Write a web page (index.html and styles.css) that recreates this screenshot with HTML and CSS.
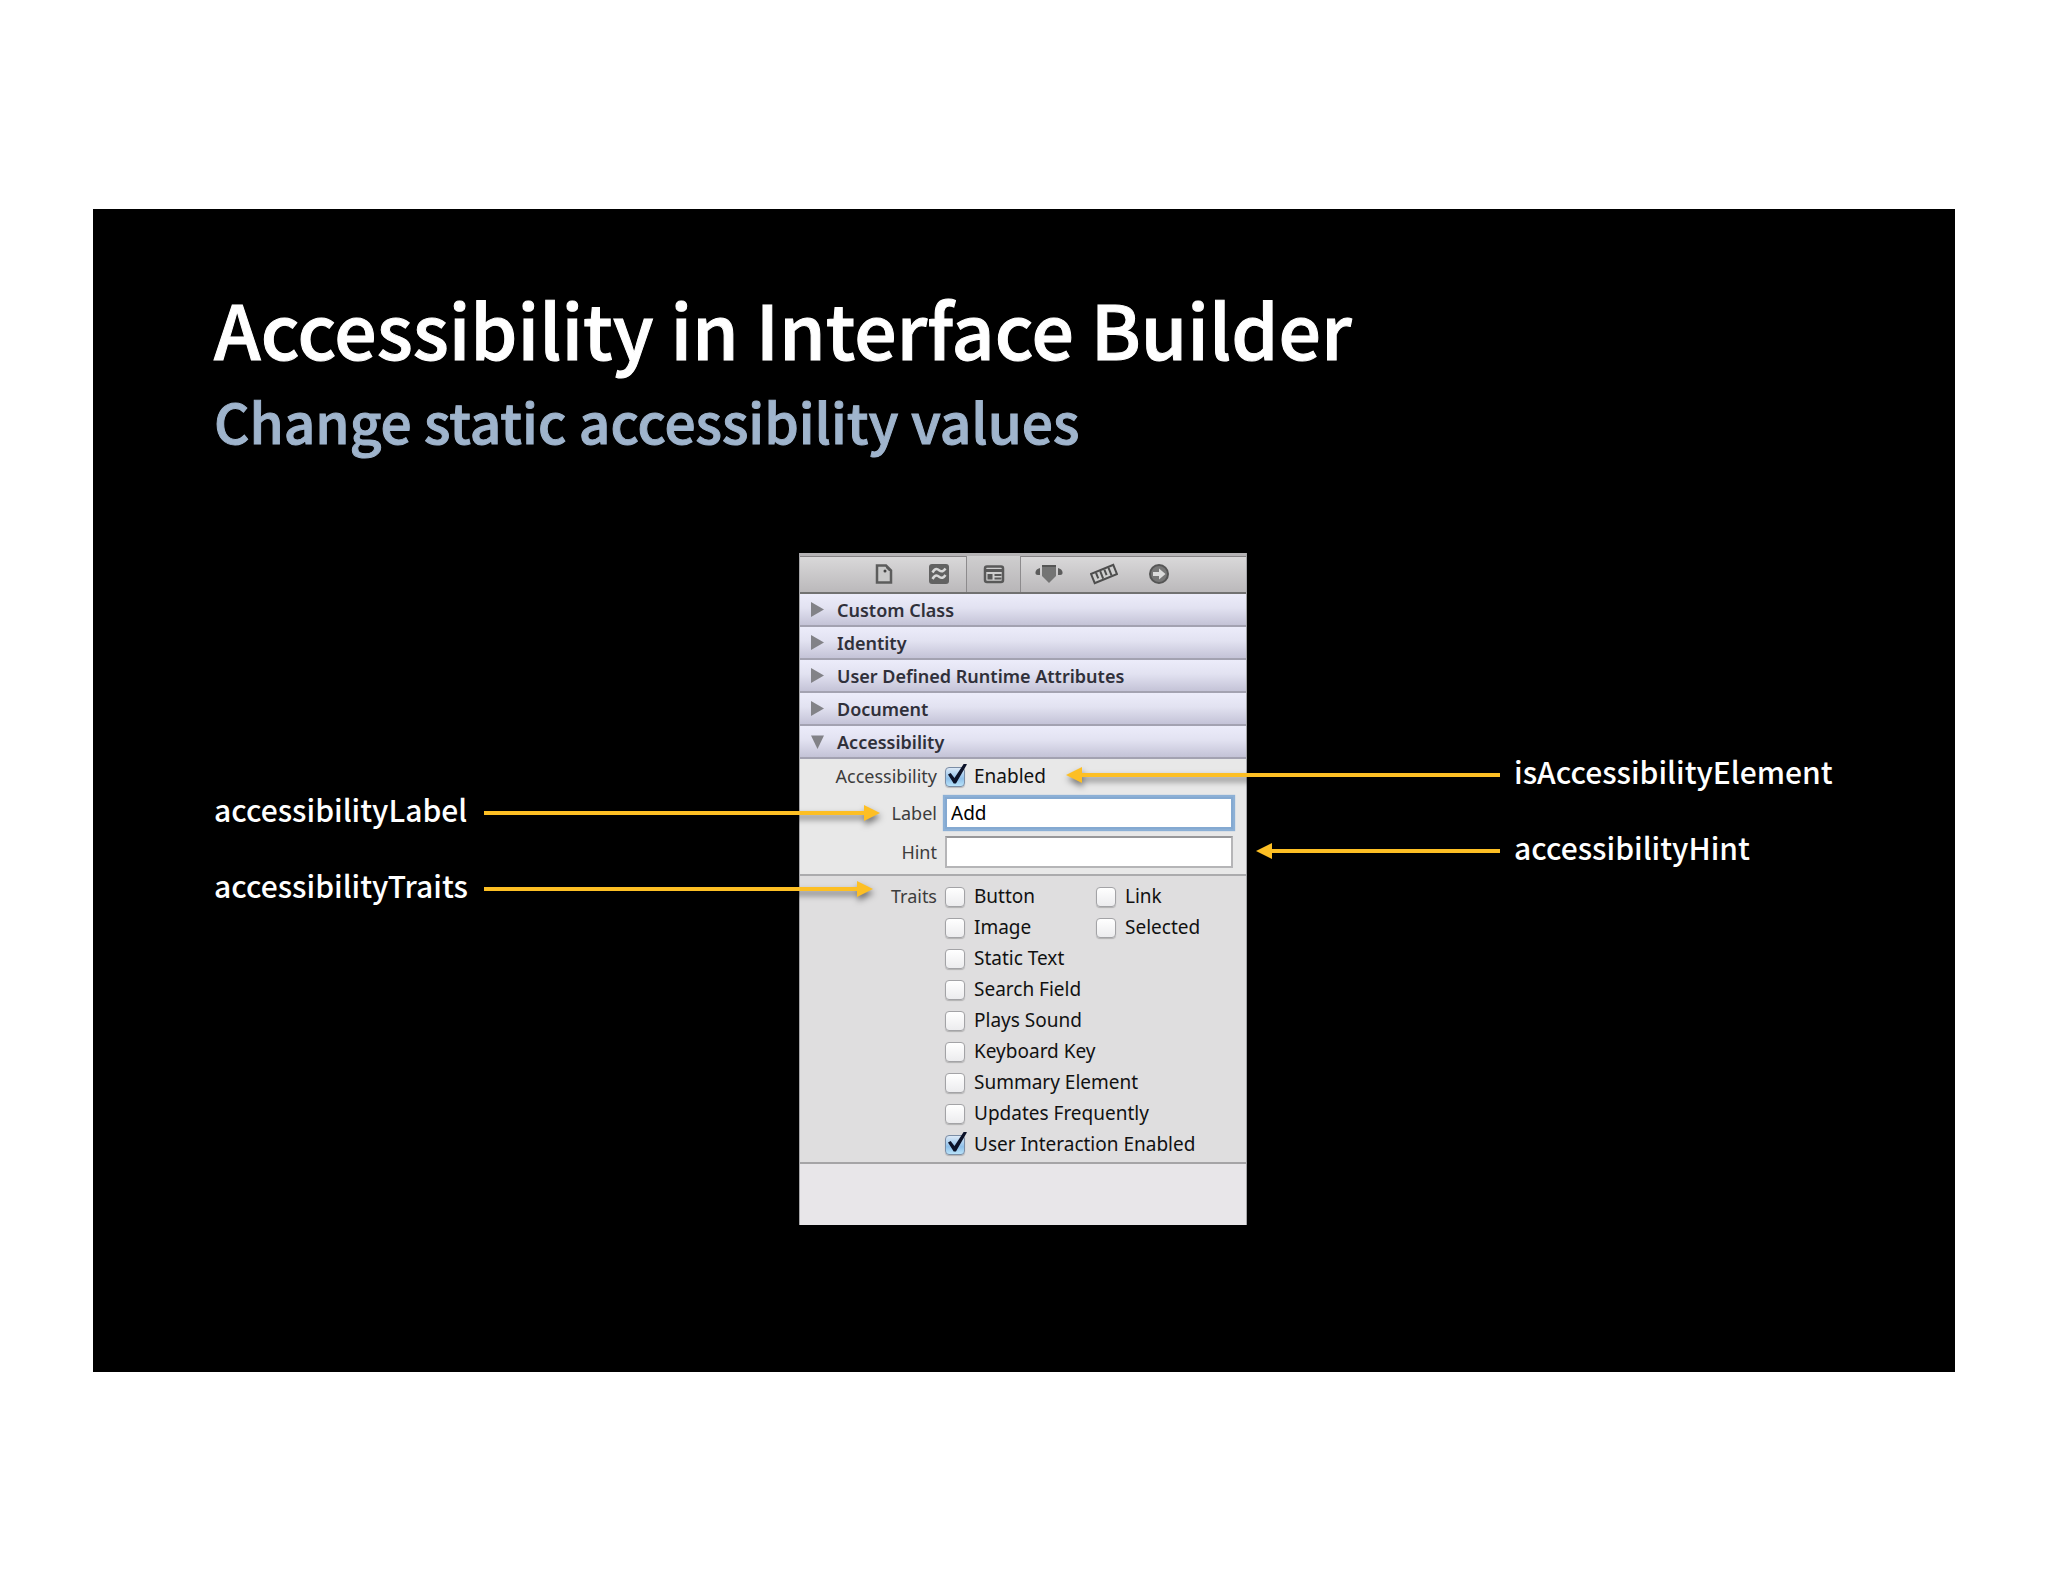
FILE: index.html
```html
<!DOCTYPE html>
<html lang="en">
<head>
  <meta charset="UTF-8" />
  <meta name="viewport" content="width=device-width, initial-scale=1" />
  <title>Accessibility in Interface Builder</title>
  <link rel="stylesheet" href="styles.css">
</head>
<body>

<main class="slide">
  <h1 class="title">Accessibility in Interface Builder</h1>
  <h2 class="subtitle">Change static accessibility values</h2>

  <div class="stage">

    <div class="callouts callouts-left">
      <div class="callout">
        <span class="callout-text">accessibilityLabel</span>
        <span class="arrow arrow-right to-label"></span>
      </div>
      <div class="callout">
        <span class="callout-text">accessibilityTraits</span>
        <span class="arrow arrow-right to-traits"></span>
      </div>
    </div>

    <!-- Inspector panel -->
    <div class="inspector">
      <div class="toolbar">
        <button class="tool" aria-label="File inspector">
          <svg width="22" height="22" viewBox="0 0 22 22"><path d="M4 2.500h9l5 5v12H4z" fill="#c9c9c9" stroke="#5c5c5c" stroke-width="2.500"/><path d="M13 2l6 6h-3l-3-3z" fill="#5c5c5c"/><circle cx="12" cy="8" r="1.500" fill="#444"/></svg>
        </button>
        <button class="tool" aria-label="Quick help">
          <svg width="22" height="22" viewBox="0 0 22 22"><rect x="1" y="1" width="20" height="20" rx="3" fill="#626262"/><path d="M4.500 9.500c3-5 5-3.500 7-2s4 1 6-2M4.500 16c3-5 5-3.500 7-2s4 1 6-2" fill="none" stroke="#d8d8d8" stroke-width="2.500"/></svg>
        </button>
        <button class="tool selected" aria-label="Identity inspector">
          <svg width="22" height="22" viewBox="0 0 22 22"><rect x="2" y="3.500" width="18" height="15.500" rx="2" fill="#cfcfcf" stroke="#595959" stroke-width="2.500"/><path d="M2 7.500h18" stroke="#595959" stroke-width="3"/><rect x="4.500" y="11" width="5" height="5.500" fill="#595959"/><path d="M11.500 12h7M11.500 15.500h7" stroke="#595959" stroke-width="2"/></svg>
        </button>
        <button class="tool" aria-label="Attributes inspector">
          <svg width="28" height="22" viewBox="0 0 28 22"><path d="M7 2h14v11l-7 7-7-7z" fill="#747474"/><path d="M7 3h14" stroke="#555" stroke-width="2"/><path d="M5 5v7H3Q0 12 .500 9 1 6 5 5zM23 5v7h2q3 0 2.500-3-.500-3-4.500-4z" fill="#5c5c5c"/></svg>
        </button>
        <button class="tool" aria-label="Size inspector">
          <svg width="28" height="22" viewBox="0 0 28 22"><g transform="rotate(-22 14 11)" fill="none" stroke="#4e4e4e"><rect x="2" y="6" width="24" height="10" fill="#cfcfcf" stroke-width="2"/><path d="M7 7v6M11.500 7v8M16 7v6M20.500 7v8" stroke-width="2"/></g></svg>
        </button>
        <button class="tool" aria-label="Connections inspector">
          <svg width="22" height="22" viewBox="0 0 22 22"><circle cx="11" cy="11" r="9" fill="#777" stroke="#555" stroke-width="2"/><path d="M5 9h6V5.500l6.500 5.500-6.500 5.500V13H5z" fill="#dcdcdc"/></svg>
        </button>
      </div>

      <button class="section-head"><span class="disclosure"></span>Custom Class</button>
      <button class="section-head"><span class="disclosure"></span>Identity</button>
      <button class="section-head"><span class="disclosure"></span>User Defined Runtime Attributes</button>
      <button class="section-head"><span class="disclosure"></span>Document</button>
      <button class="section-head" aria-expanded="true"><span class="disclosure open"></span>Accessibility</button>

      <div class="fields">
        <span class="field-label">Accessibility</span>
        <label class="check"><input type="checkbox" checked>Enabled</label>
        <label class="field-label" for="label">Label</label>
        <input class="text-field focused" type="text" id="label" value="Add">
        <label class="field-label" for="hint">Hint</label>
        <input class="text-field" type="text" id="hint">
      </div>

      <div class="traits">
        <span class="field-label">Traits</span>
        <div class="trait-list">
          <label class="check"><input type="checkbox">Button</label>
          <label class="check"><input type="checkbox">Link</label>
          <label class="check"><input type="checkbox">Image</label>
          <label class="check"><input type="checkbox">Selected</label>
          <label class="check wide"><input type="checkbox">Static Text</label>
          <label class="check wide"><input type="checkbox">Search Field</label>
          <label class="check wide"><input type="checkbox">Plays Sound</label>
          <label class="check wide"><input type="checkbox">Keyboard Key</label>
          <label class="check wide"><input type="checkbox">Summary Element</label>
          <label class="check wide"><input type="checkbox">Updates Frequently</label>
          <label class="check wide"><input type="checkbox" checked>User Interaction Enabled</label>
        </div>
      </div>
    </div>

    <div class="callouts callouts-right">
      <div class="callout">
        <span class="arrow arrow-left to-enabled"></span>
        <span class="callout-text">isAccessibilityElement</span>
      </div>
      <div class="callout">
        <span class="arrow arrow-left to-hint"></span>
        <span class="callout-text">accessibilityHint</span>
      </div>
    </div>

  </div>
</main>

</body>
</html>
```
FILE: styles.css
```css
* {
  box-sizing: border-box;
}
body {
  margin: 0;
  padding: 209px 93px;
  background: #fff;
  font-family: 'Noto Sans CJK SC', 'Open Sans', sans-serif;
}
.slide {
  background: #000;
  color: #fff;
  padding: 79px 123px 147px 121px;
}
.title {
  margin: 0;
  font-size: 75px;
  line-height: 80px;
  font-weight: 500;
  -webkit-text-stroke: 1px;
}
.subtitle {
  margin: 20px 0 101px;
  font-size: 55px;
  line-height: 64px;
  font-weight: 500;
  color: #9fb4cc;
  -webkit-text-stroke: 1px;
}
.stage {
  display: grid;
  grid-template-columns: 1fr 448px 1fr;
}

/* Callouts */
.callouts {
  position: relative;
  z-index: 1;
  display: flex;
  flex-direction: column;
  gap: 36px;
}
.callouts-left {
  padding-top: 240px;
}
.callouts-right {
  padding-top: 202px;
}
.callout {
  display: flex;
  align-items: center;
  gap: 14px;
  height: 40px;
}
.callout-text {
  font-size: 30px;
  line-height: 32px;
  font-weight: 500;
  padding-bottom: 8px;
  white-space: nowrap;
}
.callouts-left .callout-text {
  width: 256px;
}
.callouts-right .callout-text {
  width: 318px;
}
.arrow {
  flex: 1;
  display: flex;
  align-items: center;
  filter: drop-shadow(1px 4px 3px rgba(0,0,0,0.5));
}
.arrow::before {
  content: "";
  flex: 1;
  height: 4px;
  background: #fdbf24;
}
.arrow::after {
  content: "";
  width: 16px;
  height: 16px;
  background: #fdbf24;
  clip-path: polygon(0 0, 100% 50%, 0 100%);
}
.arrow-left {
  flex-direction: row-reverse;
}
.arrow-left::after {
  clip-path: polygon(100% 0, 0 50%, 100% 100%);
}
.to-label {
  margin-right: -81px;
}
.to-traits {
  margin-right: -74px;
}
.to-enabled {
  margin-left: -181px;
}
.to-hint {
  margin-left: 9px;
}

/* Inspector */
.inspector {
  font-family: 'Noto Sans', 'Open Sans', sans-serif;
  font-size: 19px;
  color: #111;
  background: #e8e6e9;
  border: 1px solid #a5a5a8;
  border-width: 0 1px;
  padding-bottom: 61px;
}
.toolbar {
  display: flex;
  justify-content: center;
  height: 41px;
  padding-right: 4px;
  border-top: 3px solid #b5b3b5;
  border-bottom: 2px solid #717171;
  background: linear-gradient(#dad9da, #bbb9bb);
  box-shadow: inset 0 1px #858385;
}
.tool {
  width: 55px;
  padding: 0;
  border: none;
  background: none;
  display: flex;
  align-items: center;
  justify-content: center;
}
.tool.selected {
  border: 1px solid #8d8b8d;
  border-width: 0 1px;
  background: linear-gradient(#cfcecf, #b8b6b8);
}
.section-head {
  display: flex;
  align-items: center;
  width: 100%;
  height: 33px;
  padding: 0 11px;
  gap: 13px;
  border: none;
  border-bottom: 2px solid #a3a2b1;
  background: linear-gradient(#ececfa, #e2e2f1 45%, #c4c3d7);
  font-family: inherit;
  font-size: 18px;
  font-weight: 600;
  color: #30303a;
}
.disclosure {
  width: 13px;
  height: 15px;
  background: #828287;
  clip-path: polygon(0 0, 100% 50%, 0 100%);
}
.disclosure.open {
  clip-path: polygon(0 10%, 100% 10%, 50% 100%);
}
.fields {
  display: grid;
  grid-template-columns: 137px 1fr;
  column-gap: 8px;
  row-gap: 7px;
  padding: 4px 13px 6px 0;
  background: #e8e8e8;
  border-bottom: 2px solid #ababad;
  align-items: center;
  line-height: 27px;
}
.field-label {
  text-align: right;
  font-size: 18px;
  color: #3c3c3c;
}
.check {
  display: flex;
  align-items: center;
  gap: 9px;
  white-space: nowrap;
}
.check input {
  appearance: none;
  position: relative;
  width: 20px;
  height: 20px;
  margin: 0;
  border: 1px solid #a3a3a6;
  border-radius: 4px;
  background: linear-gradient(#fff, #ececee);
  box-shadow: 0 1px 1px rgba(0,0,0,0.2);
}
.check input:checked {
  border-color: #7b8da5;
  background: linear-gradient(#dbe8f6, #8fc0e9 60%, #b9e3fa);
}
.check input:checked::after {
  content: "";
  position: absolute;
  left: 2px;
  top: -4px;
  width: 19px;
  height: 20px;
  background: #0c1228;
  clip-path: polygon(0 55%, 14% 47%, 34% 72%, 84% 0, 100% 4%, 42% 100%, 30% 100%);
}
.text-field {
  width: 100%;
  height: 32px;
  padding: 0 4px;
  border: 2px solid #b5b5b7;
  border-top-color: #98989a;
  background: #fff;
  font-family: inherit;
  font-size: 19px;
  color: #000;
  outline: none;
}
.text-field.focused {
  border-color: #84a9d1;
  box-shadow: 0 0 1px 2px #8cb0d6;
}
.traits {
  display: grid;
  grid-template-columns: 137px 1fr;
  column-gap: 8px;
  padding: 5px 0 2px;
  background: #dfdedf;
  border-bottom: 2px solid #a5a4a6;
  line-height: 31px;
}
.trait-list {
  display: grid;
  grid-template-columns: 151px 1fr;
}
.wide {
  grid-column: span 2;
}
```
